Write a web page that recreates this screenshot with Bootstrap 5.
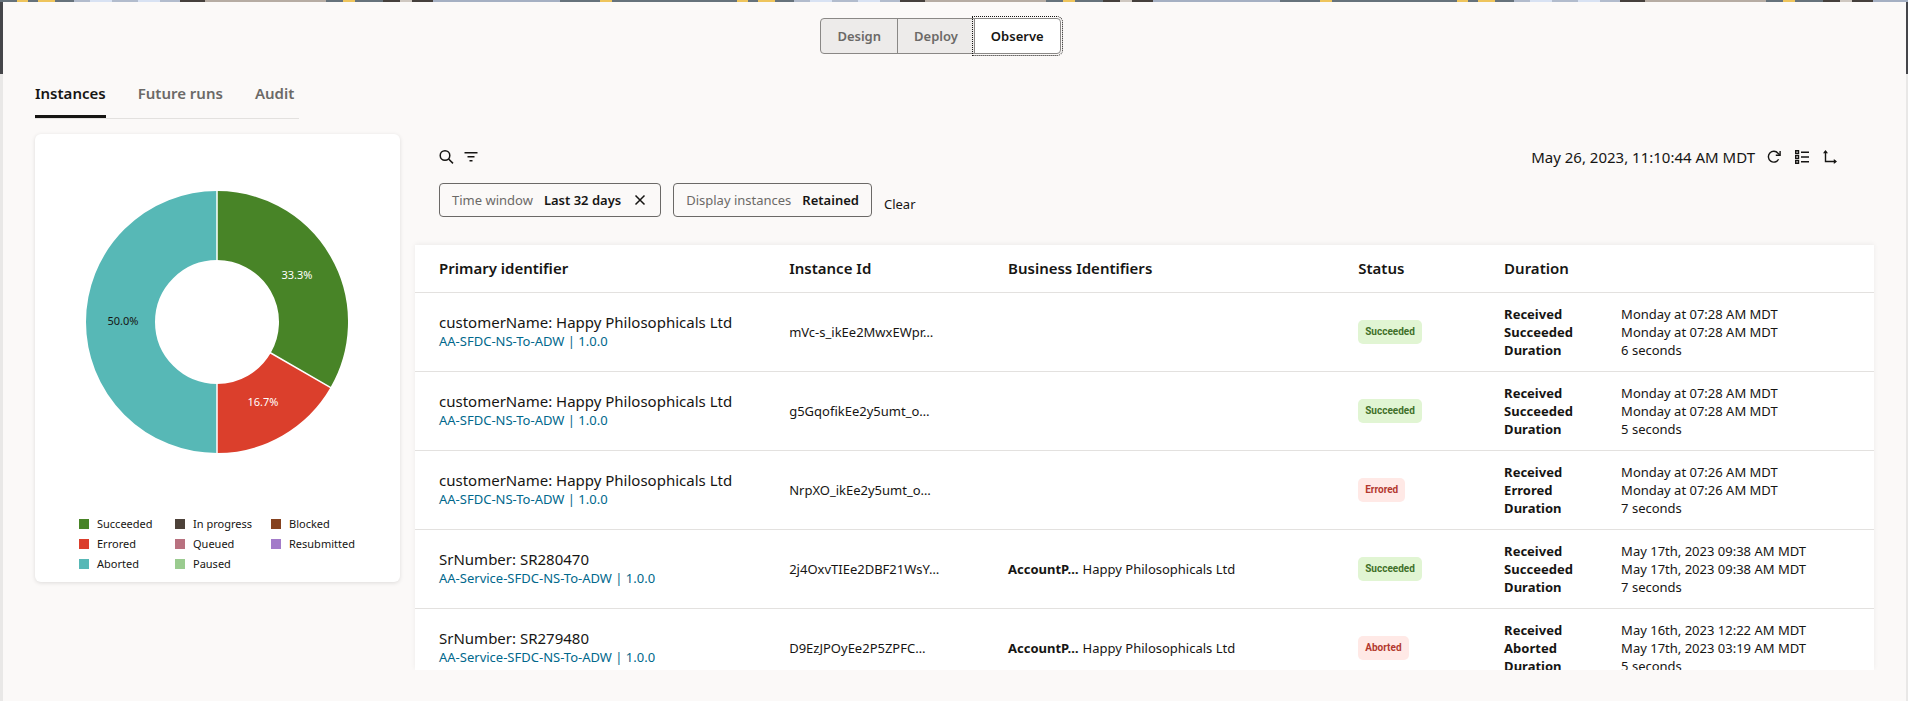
<!DOCTYPE html>
<html lang="en">
<head>
<meta charset="utf-8">
<meta name="viewport" content="width=device-width, initial-scale=1">
<title>Observe instances</title>
<link rel="stylesheet" href="https://cdn.jsdelivr.net/npm/bootstrap@5.3.0/dist/css/bootstrap.min.css">
<style>
  :root { --ink: #161513; --muted: #6b6967; --line: #e3e1df; --panel: #fbf9f8; }
  body {
    font-family: "Noto Sans", "Open Sans", sans-serif;
    font-size: 13px; line-height: 18px; color: var(--ink);
    background: linear-gradient(#45464a, #45464a) 0 0 / 100% 74px no-repeat #e9e8e7;
  }
  .pattern {
    height: 2px;
    background: repeating-linear-gradient(90deg,
      #66727b 0 17px, #eec45c 17px 28px, #66727b 28px 38px, #eec45c 38px 55px,
      #66727b 55px 74px, #b2bccd 74px 90px, #d8e2f3 90px 112px, #b2bccd 112px 138px,
      #d8e2f3 138px 160px, #b2bccd 160px 180px, #453f3c 180px 205px, #b6aca3 205px 326px,
      #66727b 326px 343px, #eec45c 343px 355px, #66727b 355px 383px, #453f3c 383px 400px,
      #cfc8c1 400px 412px, #453f3c 412px 433px, #a5b0c3 433px 560px, #66727b 560px 600px,
      #eec45c 600px 612px, #66727b 612px 720px);
  }
  .page-panel { height: calc(100vh - 2px); margin: 0 2px 0 3px; padding: 16px 32px 31px; background: var(--panel); }
  .mode-switch { margin-right: 28px; }
  .mode-switch .btn {
    --bs-btn-font-size: 13px; --bs-btn-line-height: 18px; --bs-btn-font-weight: 600;
    --bs-btn-padding-x: 16px; --bs-btn-padding-y: 8px; --bs-btn-border-radius: 4px;
    --bs-btn-color: #6b6967; --bs-btn-bg: #edebea; --bs-btn-border-color: #8a8886;
    --bs-btn-hover-color: #161513; --bs-btn-hover-bg: #e4e2e0; --bs-btn-hover-border-color: #8a8886;
    --bs-btn-active-color: #161513; --bs-btn-active-bg: #fff; --bs-btn-active-border-color: #8a8886;
  }
  .mode-switch .btn-check:checked + .btn { outline: 1px dotted var(--ink); outline-offset: 1px; }
  .view-tabs { margin-top: 16px; gap: 32px; padding-right: 5px; border-bottom: 1px solid var(--line); }
  .view-tabs .nav-link {
    padding: 11px 0 10px; font-size: 15px; line-height: 24px; font-weight: 600;
    color: var(--muted); border-bottom: 3px solid transparent;
  }
  .view-tabs .nav-link.active { color: var(--ink); border-color: var(--ink); }
  .content-row { margin-top: 15px; gap: 15px; min-height: 0; }
  .chart-card { flex: 0 0 365px; border: 0; border-radius: 6px; box-shadow: 0 1px 4px rgba(0, 0, 0, .12); padding: 57px 0 8px; --bs-card-color: #161513; }
  .donut { width: 262px; height: 262px; margin-left: 51px; font-size: 11px; }
  .chart-legend { display: grid; grid-template-columns: repeat(3, 96px); margin: 61px 0 0 44px; font-size: 11px; line-height: 20px; }
  .swatch { width: 10px; height: 10px; }
  .toolbar-row { height: 22px; margin-top: 12px; padding: 0 37px 0 24px; }
  .icon-btn { border: 0; padding: 0; background: none; color: var(--ink); line-height: 0; }
  .list-btn { margin: 0 14px; }
  .stamp { font-size: 15px; line-height: 22px; }
  .filter-row { margin: 15px 0 28px; padding-left: 24px; gap: 12px; }
  .chip { height: 34px; padding: 0 12px; gap: 11px; border: 1px solid #6b6967; border-radius: 4px; }
  .chip-name { color: var(--muted); }
  .clear-btn { border: 0; background: none; padding: 0 0 4px; color: var(--ink); }
  .table-area { overflow-y: auto; scrollbar-width: none; background: #fff; box-shadow: 0 -1px 5px rgba(0, 0, 0, .06); clip-path: inset(-8px -8px 0 -8px); }
  .table-area::-webkit-scrollbar { display: none; }
  .instances { table-layout: fixed; margin: 0; color: var(--ink); border-color: var(--line); --bs-table-bg: #fff; --bs-table-color: #161513; }
  .instances th, .instances td { padding: 0 24px; vertical-align: middle; color: var(--ink); }
  .instances thead th { height: 47px; font-size: 15px; font-weight: 600; border-color: var(--line); }
  .instances tbody td { height: 79px; }
  .instances tbody td:first-child { padding-bottom: 2px; }
  .w-main { width: 24%; } .w-id { width: 15%; } .w-status { width: 10%; } .w-time { width: 27%; }
  .row-title { font-size: 15px; line-height: 20px; }
  .flow-link { color: #00688c; text-decoration: none; display: block; }
  .biz { gap: 4px; }
  .status { display: inline-block; padding: 3px 7px; border-radius: 5px; font: 700 10px/18px Roboto, sans-serif; }
  .status-ok { background: #e1f5d3; color: #41702a; }
  .status-bad { background: #ffe9e6; color: #b3392f; }
  .times { display: grid; grid-template-columns: 117px 1fr; margin: 0; white-space: nowrap; }
  .times dd { margin: 0; }
</style>
</head>
<body>
<div class="pattern"></div>
<main class="page-panel d-flex flex-column">
  <div class="d-flex justify-content-center">
    <div class="btn-group mode-switch" role="group" aria-label="Mode">
      <input type="radio" class="btn-check" name="mode" id="mode-design"><label class="btn" for="mode-design">Design</label>
      <input type="radio" class="btn-check" name="mode" id="mode-deploy"><label class="btn" for="mode-deploy">Deploy</label>
      <input type="radio" class="btn-check" name="mode" id="mode-observe" checked><label class="btn" for="mode-observe">Observe</label>
    </div>
  </div>

  <nav class="nav view-tabs align-self-start">
    <a class="nav-link active" aria-current="page" href="#instances">Instances</a>
    <a class="nav-link" href="#future">Future runs</a>
    <a class="nav-link" href="#audit">Audit</a>
  </nav>

  <div class="content-row d-flex flex-grow-1">
    <section class="card chart-card align-self-start" aria-label="Instances by status">
      <svg class="donut" viewBox="-131 -131 262 262" role="img" aria-label="Status share">
        <g fill="none" stroke-width="69">
          <path stroke="#488427" d="M0-96.500A96.500 96.500 0 0 1 83.570 48.250"/>
          <path stroke="#db3f2c" d="M83.570 48.250A96.500 96.500 0 0 1 0 96.500"/>
          <path stroke="#57b8b6" d="M0 96.500A96.500 96.500 0 0 1 0-96.500"/>
        </g>
        <path stroke="#fff" stroke-width="1.500" d="M0-132V-60M0 60V132M52 30L115 66.400"/>
        <g text-anchor="middle">
          <text x="80" y="-43" fill="#fff">33.3%</text>
          <text x="46" y="84" fill="#fff">16.7%</text>
          <text x="-94" y="3" fill="#161513">50.0%</text>
        </g>
      </svg>
      <div class="chart-legend">
        <div class="d-flex align-items-center gap-2"><span class="swatch" style="background:#488427"></span>Succeeded</div>
        <div class="d-flex align-items-center gap-2"><span class="swatch" style="background:#4d4239"></span>In progress</div>
        <div class="d-flex align-items-center gap-2"><span class="swatch" style="background:#85421f"></span>Blocked</div>
        <div class="d-flex align-items-center gap-2"><span class="swatch" style="background:#db3f2c"></span>Errored</div>
        <div class="d-flex align-items-center gap-2"><span class="swatch" style="background:#b8717f"></span>Queued</div>
        <div class="d-flex align-items-center gap-2"><span class="swatch" style="background:#a37bc9"></span>Resubmitted</div>
        <div class="d-flex align-items-center gap-2"><span class="swatch" style="background:#57b8b6"></span>Aborted</div>
        <div class="d-flex align-items-center gap-2"><span class="swatch" style="background:#9acb8f"></span>Paused</div>
      </div>
    </section>

    <section class="d-flex flex-column flex-grow-1">
      <div class="toolbar-row d-flex align-items-center justify-content-between">
        <div class="d-flex align-items-center">
          <button class="icon-btn me-2" type="button" aria-label="Search">
            <svg width="16" height="16" viewBox="0 0 16 16" fill="none" stroke="currentColor" stroke-width="1.500"><circle cx="6" cy="6.500" r="4.800"/><path d="M9.600 10L14 14.400"/></svg>
          </button>
          <button class="icon-btn" type="button" aria-label="Filter">
            <svg width="16" height="16" viewBox="0 0 16 16" fill="none" stroke="currentColor" stroke-width="1.500"><path d="M1.500 3.800h13M4.500 7.800h7M6.500 11.800h3"/></svg>
          </button>
        </div>
        <div class="d-flex align-items-center">
          <span class="stamp me-2">May 26, 2023, 11:10:44 AM MDT</span>
          <button class="icon-btn ms-1" type="button" aria-label="Refresh">
            <svg width="14" height="14" viewBox="0 0 14 14" fill="none" stroke="currentColor" stroke-width="1.400"><path d="M11.600 9.200A5.400 5.400 0 1 1 11 3.300L12.600 4.800"/><path d="M13.100 1v4.300H8.800"/></svg>
          </button>
          <button class="icon-btn list-btn" type="button" aria-label="List view">
            <svg width="14" height="14" viewBox="0 0 14 14" fill="none" stroke="currentColor" stroke-width="1.400"><path d="M.7.700h2.800v2.800H.7zM.7 5.600h2.800v2.800H.7zM.7 10.500h2.800v2.800H.7z"/><path d="M6 2.200h8M6 7h8M6 11.800h8"/></svg>
          </button>
          <button class="icon-btn" type="button" aria-label="Axes">
            <svg width="14" height="14" viewBox="0 0 14 14" fill="none" stroke="currentColor" stroke-width="1.400"><path d="M2.500 1.500v10h10"/><path fill="currentColor" stroke="none" d="M2.500 0L5 3.200H0zM14 11.500L10.800 14V9z"/></svg>
          </button>
        </div>
      </div>

      <div class="filter-row d-flex align-items-end">
        <div class="chip d-flex align-items-center">
          <span class="chip-name">Time window</span><span class="fw-semibold">Last 32 days</span>
          <button class="icon-btn" type="button" aria-label="Remove time window">
            <svg width="16" height="16" viewBox="0 0 16 16" fill="none" stroke="currentColor" stroke-width="1.500"><path d="M3.500 3.500l9 9M12.500 3.500l-9 9"/></svg>
          </button>
        </div>
        <div class="chip d-flex align-items-center">
          <span class="chip-name">Display instances</span><span class="fw-semibold">Retained</span>
        </div>
        <button class="clear-btn" type="button">Clear</button>
      </div>

      <div class="table-area flex-grow-1">
        <table class="table instances">
          <thead>
            <tr><th class="w-main">Primary identifier</th><th class="w-id">Instance Id</th><th class="w-main">Business Identifiers</th><th class="w-status">Status</th><th class="w-time">Duration</th></tr>
          </thead>
          <tbody>
            <tr>
              <td><div class="row-title">customerName: Happy Philosophicals Ltd</div><a class="flow-link" href="#flow">AA-SFDC-NS-To-ADW | 1.0.0</a></td>
              <td>mVc-s_ikEe2MwxEWpr…</td><td></td>
              <td><span class="status status-ok">Succeeded</span></td>
              <td><dl class="times"><dt>Received</dt><dd>Monday at 07:28 AM MDT</dd><dt>Succeeded</dt><dd>Monday at 07:28 AM MDT</dd><dt>Duration</dt><dd>6 seconds</dd></dl></td>
            </tr>
            <tr>
              <td><div class="row-title">customerName: Happy Philosophicals Ltd</div><a class="flow-link" href="#flow">AA-SFDC-NS-To-ADW | 1.0.0</a></td>
              <td>g5GqofikEe2y5umt_o…</td><td></td>
              <td><span class="status status-ok">Succeeded</span></td>
              <td><dl class="times"><dt>Received</dt><dd>Monday at 07:28 AM MDT</dd><dt>Succeeded</dt><dd>Monday at 07:28 AM MDT</dd><dt>Duration</dt><dd>5 seconds</dd></dl></td>
            </tr>
            <tr>
              <td><div class="row-title">customerName: Happy Philosophicals Ltd</div><a class="flow-link" href="#flow">AA-SFDC-NS-To-ADW | 1.0.0</a></td>
              <td>NrpXO_ikEe2y5umt_o…</td><td></td>
              <td><span class="status status-bad">Errored</span></td>
              <td><dl class="times"><dt>Received</dt><dd>Monday at 07:26 AM MDT</dd><dt>Errored</dt><dd>Monday at 07:26 AM MDT</dd><dt>Duration</dt><dd>7 seconds</dd></dl></td>
            </tr>
            <tr>
              <td><div class="row-title">SrNumber: SR280470</div><a class="flow-link" href="#flow">AA-Service-SFDC-NS-To-ADW | 1.0.0</a></td>
              <td>2j4OxvTIEe2DBF21WsY…</td>
              <td><div class="biz d-flex"><b>AccountP…</b><span>Happy Philosophicals Ltd</span></div></td>
              <td><span class="status status-ok">Succeeded</span></td>
              <td><dl class="times"><dt>Received</dt><dd>May 17th, 2023 09:38 AM MDT</dd><dt>Succeeded</dt><dd>May 17th, 2023 09:38 AM MDT</dd><dt>Duration</dt><dd>7 seconds</dd></dl></td>
            </tr>
            <tr>
              <td><div class="row-title">SrNumber: SR279480</div><a class="flow-link" href="#flow">AA-Service-SFDC-NS-To-ADW | 1.0.0</a></td>
              <td>D9EzJPOyEe2P5ZPFC…</td>
              <td><div class="biz d-flex"><b>AccountP…</b><span>Happy Philosophicals Ltd</span></div></td>
              <td><span class="status status-bad">Aborted</span></td>
              <td><dl class="times"><dt>Received</dt><dd>May 16th, 2023 12:22 AM MDT</dd><dt>Aborted</dt><dd>May 17th, 2023 03:19 AM MDT</dd><dt>Duration</dt><dd>5 seconds</dd></dl></td>
            </tr>
          </tbody>
        </table>
      </div>
    </section>
  </div>
</main>
<script src="https://cdn.jsdelivr.net/npm/bootstrap@5.3.0/dist/js/bootstrap.bundle.min.js"></script>
</body>
</html>
